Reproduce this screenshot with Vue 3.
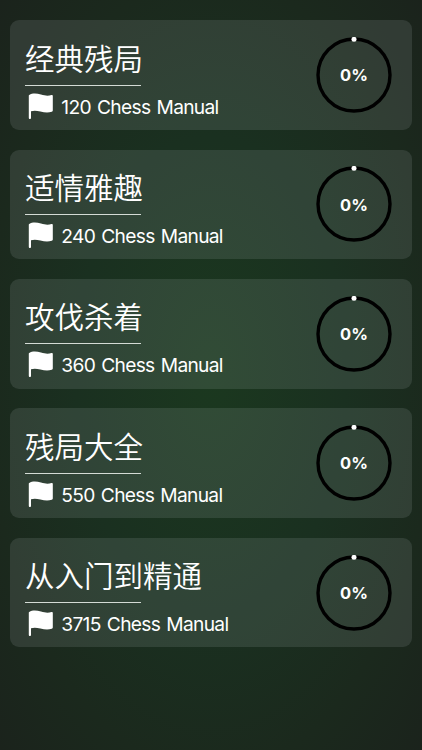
<script setup>
const collections = [
  { title: '经典残局', count: 120, progress: 0 },
  { title: '适情雅趣', count: 240, progress: 0 },
  { title: '攻伐杀着', count: 360, progress: 0 },
  { title: '残局大全', count: 550, progress: 0 },
  { title: '从入门到精通', count: 3715, progress: 0 },
]
</script>

<template>
  <main class="screen">
    <article v-for="item in collections" :key="item.title" class="card">
      <div class="info">
        <h2 class="title">{{ item.title }}</h2>
        <div class="rule"></div>
        <div class="meta">
          <svg class="flag" viewBox="0 0 26 27" aria-hidden="true">
            <path d="M1.2 2C4.2.2 8.4.2 13 1.6c4.3 1.3 7.5 1.3 10.5.5.9-.3 1.3.1 1.3 1v14.4c0 .7-.3 1.1-1 1.3-3.6 1.1-7.3.8-11.4-.3-3.8-1-6.9-1.1-9.4-.2v6.5c0 .8-.4 1.2-1.1 1.2S.8 25.6.8 24.8V2.8c0-.4.1-.6.4-.8Z" fill="#fff" />
          </svg>
          <span class="count">{{ item.count }} Chess Manual</span>
        </div>
      </div>
      <div class="gauge">
        <svg class="ring" viewBox="0 0 76 76" aria-hidden="true">
          <circle cx="38" cy="38" r="36" fill="none" stroke="#000" stroke-width="3.4" />
          <circle cx="38" cy="2.3" r="2.5" fill="#fff" />
        </svg>
        <span class="percent">{{ item.progress }}%</span>
      </div>
    </article>
  </main>
</template>

<style>
body {
  margin: 0;
  background: #1b251d;
}
</style>

<style scoped>
.screen {
  box-sizing: border-box;
  height: 750px;
  padding: 20.3px 10px 0;
  display: flex;
  flex-direction: column;
  gap: 19.8px;
  overflow: hidden;
  color: #fff;
  font-family: Inter, "Noto Sans CJK SC", sans-serif;
  background: radial-gradient(ellipse 300px 530px at 50% 50%, #1b381f 0%, #1a3020 45%, #1b291d 75%, #1b231c 100%);
}
.card {
  box-sizing: border-box;
  flex: none;
  height: 109.6px;
  padding: 0 20px 0 15px;
  display: flex;
  justify-content: space-between;
  border-radius: 9px;
  background: rgba(240, 245, 255, 0.105);
}
.info {
  padding-top: 14.4px;
}
.title {
  margin: 0;
  height: 50px;
  font-family: "Noto Sans CJK SC", sans-serif;
  font-size: 29.5px;
  line-height: 44px;
  font-weight: 350;
  white-space: nowrap;
}
.rule {
  width: 115.5px;
  height: 1px;
  background: #d4dbd5;
}
.meta {
  display: flex;
  align-items: center;
  height: 41px;
  padding-left: 3px;
  gap: 7.3px;
}
.flag {
  width: 26px;
  height: 27px;
}
.count {
  padding-top: 0.8px;
  font-size: 19.2px;
  line-height: 24px;
  letter-spacing: -0.7px;
  word-spacing: 1.5px;
  white-space: nowrap;
}
.gauge {
  width: 76px;
  height: 76px;
  margin-top: 16.7px;
  display: grid;
  place-items: center;
}
.ring,
.percent {
  grid-area: 1 / 1;
}
.ring {
  width: 76px;
  height: 76px;
}
.percent {
  padding-top: 0.6px;
  font-size: 16.5px;
  line-height: 20px;
  font-weight: 700;
}
</style>
